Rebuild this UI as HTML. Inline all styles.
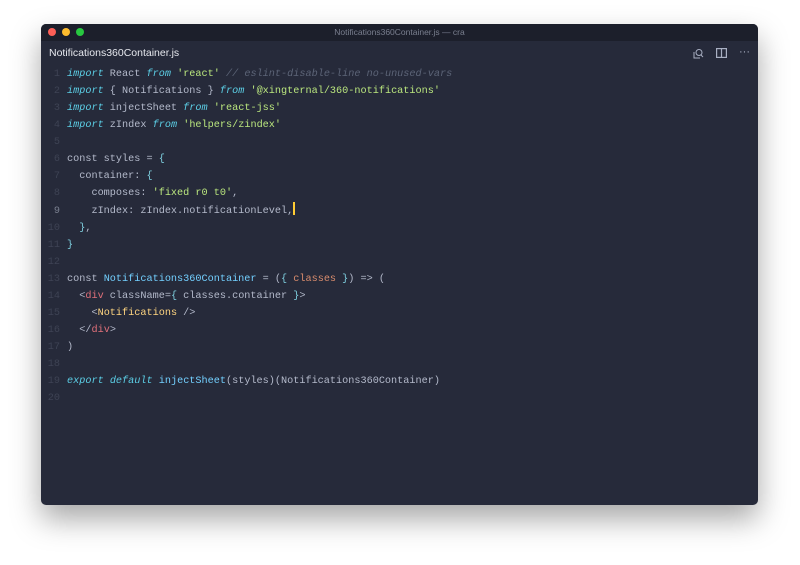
<!DOCTYPE html>
<html><head><style>
body{margin:0;width:800px;height:565px;background:#fff;position:relative;overflow:hidden;font-family:"Liberation Sans",sans-serif}
.win{position:absolute;left:41px;top:24px;width:717px;height:481px;background:#262a3a;border-radius:5px;overflow:hidden;box-shadow:0 14px 30px rgba(0,0,0,.35)}
.tb{height:17px;background:#1c1f2b;position:relative}
.tb .d{position:absolute;top:4px;width:8px;height:8px;border-radius:50%}
.tb .t{position:absolute;left:0;right:0;text-align:center;font-size:8.5px;color:#7a7f8f;top:3px}
.tab{height:24px;background:#262a3a;position:relative}
.tab span{position:absolute;left:8px;top:6px;font-size:10.5px;color:#e6e8ee}
.code{position:absolute;left:0;top:42px;font-family:"Liberation Mono",monospace;font-size:10.2px;line-height:17px;white-space:pre;color:#b4bacb}
.ln{display:inline-block;width:19px;text-align:right;color:#3e4354;margin-right:7px}
.k{color:#5ccfe6;font-style:italic}.s{color:#bae67e}.c{color:#5c6477;font-style:italic}.b{color:#73d0ff}.o{color:#d98c6d}.r{color:#e0707a}.y{color:#ffd580}.p{color:#7fd0e0}
.cur{display:inline-block;width:1.5px;height:13px;background:#ffcc33;vertical-align:-2px}
</style></head><body>
<div class="win">
<div class="tb"><div class="d" style="left:7px;background:#fd5f57"></div><div class="d" style="left:21px;background:#febc2e"></div><div class="d" style="left:35px;background:#28c840"></div><div class="t">Notifications360Container.js — cra</div></div>
<div class="tab"><span>Notifications360Container.js</span>
<svg style="position:absolute;left:652px;top:7px" width="11" height="11" viewBox="0 0 11 11" fill="none" stroke="#a9b0c3" stroke-width="1"><path d="M1 4v6h6"/><circle cx="6" cy="4.5" r="3"/><path d="M8 7l2 2"/></svg>
<svg style="position:absolute;left:675px;top:7px" width="11" height="10" viewBox="0 0 11 10" fill="none" stroke="#a9b0c3" stroke-width="1.2"><rect x="0.6" y="0.6" width="9.8" height="8.8"/><path d="M5.5 1v8"/></svg>
<span style="left:698px;top:5px;color:#a9b0c3;font-size:11px">···</span>
</div>
<div class="code"><span class="ln">1</span><span class="k">import</span> React <span class="k">from</span> <span class="s">'react'</span> <span class="c">// eslint-disable-line no-unused-vars</span>
<span class="ln">2</span><span class="k">import</span> { Notifications } <span class="k">from</span> <span class="s">'@xingternal/360-notifications'</span>
<span class="ln">3</span><span class="k">import</span> injectSheet <span class="k">from</span> <span class="s">'react-jss'</span>
<span class="ln">4</span><span class="k">import</span> zIndex <span class="k">from</span> <span class="s">'helpers/zindex'</span>
<span class="ln">5</span>
<span class="ln">6</span>const styles = <span class="p">{</span>
<span class="ln">7</span>  container: <span class="p">{</span>
<span class="ln">8</span>    composes: <span class="s">'fixed r0 t0'</span>,
<span class="ln" style="color:#7a8090">9</span>    zIndex: zIndex.notificationLevel,<span class="cur"></span>
<span class="ln">10</span>  <span class="p">}</span>,
<span class="ln">11</span><span class="p">}</span>
<span class="ln">12</span>
<span class="ln">13</span>const <span class="b">Notifications360Container</span> = (<span class="p">{</span> <span class="o">classes</span> <span class="p">}</span>) =&gt; (
<span class="ln">14</span>  &lt;<span class="r">div</span> className=<span class="p">{</span> classes.container <span class="p">}</span>&gt;
<span class="ln">15</span>    &lt;<span class="y">Notifications</span> /&gt;
<span class="ln">16</span>  &lt;/<span class="r">div</span>&gt;
<span class="ln">17</span>)
<span class="ln">18</span>
<span class="ln">19</span><span class="k">export</span> <span class="k">default</span> <span class="b">injectSheet</span>(styles)(Notifications360Container)
<span class="ln">20</span></div>
</div>
</body></html>
